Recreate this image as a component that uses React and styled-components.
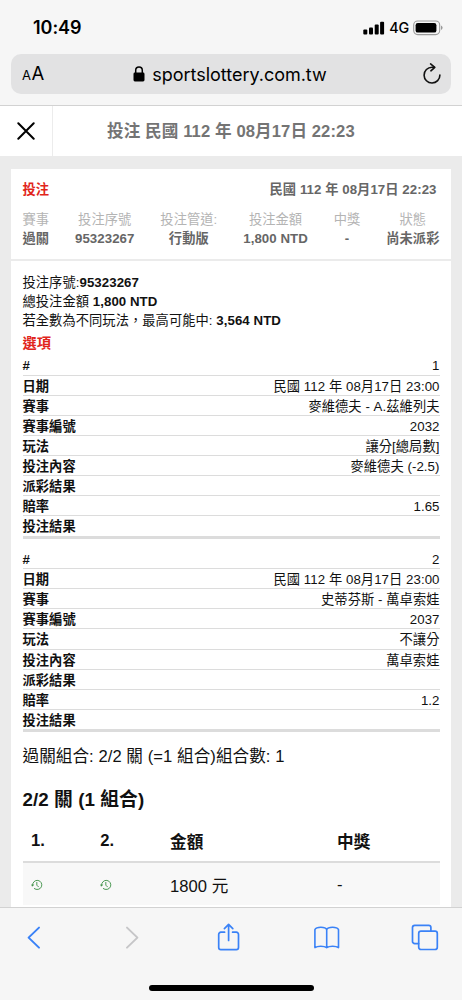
import React from 'react';
import styled, { createGlobalStyle } from 'styled-components';

const Global = createGlobalStyle`
  * { box-sizing: border-box; }
  body { margin: 0; background: #ebebeb; }
`;

const Screen = styled.div`
  width: 462px;
  height: 1000px;
  display: flex;
  flex-direction: column;
  overflow: hidden;
  background: #ebebeb;
  color: #111;
  font-family: 'Liberation Sans', 'Noto Sans CJK TC', sans-serif;
  white-space: nowrap;
`;

const Chrome = styled.header`
  flex: none;
  height: 106px;
  background: #f6f6f6;
  border-bottom: 1px solid #d2d2d2;
  padding: 0 11px;
  font-family: Inter, sans-serif;
  color: #000;
`;

const StatusBar = styled.div`
  height: 54px;
  display: flex;
  align-items: center;
  padding: 1px 8px 0 22px;
`;

const Clock = styled.span`
  flex: 1;
  font-size: 18px;
  font-weight: 600;
  letter-spacing: -0.05px;
`;

const Network = styled.span`
  font-size: 14.3px;
  font-weight: 500;
  letter-spacing: -0.2px;
  margin: 0 4px 0 4px;
`;

const AddressBar = styled.div`
  height: 40px;
  border-radius: 10px;
  background: #e2e2e3;
  display: grid;
  grid-template-columns: 60px 1fr 60px;
  align-items: center;
`;

const TextSize = styled.span`
  padding-left: 11px;
  line-height: 20px;
  font-size: 18.5px;
`;

const SmallA = styled.span`
  font-size: 13px;
  margin-right: 0.5px;
`;

const Url = styled.div`
  display: flex;
  align-items: center;
  justify-content: center;
  gap: 7.5px;
  padding-right: 2.5px;
  font-size: 18px;
  letter-spacing: -0.03px;
`;

const ReloadSlot = styled.div`
  display: flex;
  justify-content: flex-end;
  padding-right: 9px;
`;

const TitleBar = styled.div`
  flex: none;
  height: 50px;
  display: flex;
  background: #fff;
`;

const CloseButton = styled.div`
  width: 52.5px;
  display: flex;
  align-items: center;
  justify-content: center;
  border-right: 1px solid #ececec;
`;

const Title = styled.div`
  flex: 1;
  padding-left: 54.5px;
  line-height: 51px;
  font-size: 16.6px;
  letter-spacing: 0.1px;
  font-weight: 700;
  color: #747474;
`;

const Content = styled.main`
  flex: 1;
  min-height: 0;
  overflow: hidden;
  padding: 12.5px 11px 0;
`;

const Card = styled.section`
  height: 760px;
  background: #fff;
  font-size: 13.25px;
  letter-spacing: 0.06px;
`;

const Summary = styled.div`
  height: 92px;
  padding: 11px 11.5px 0;
  border-bottom: 2px solid #ebebeb;
  color: #666;
  font-weight: 700;
`;

const SummaryHead = styled.div`
  display: flex;
  justify-content: space-between;
  line-height: 20px;
  padding-right: 3px;
`;

const Red = styled.span`
  color: #e1251b;
`;

const Facts = styled.div`
  display: flex;
  justify-content: space-between;
  margin-top: 10px;
`;

const Fact = styled.div`
  text-align: center;
  line-height: 19.3px;
`;

const FactLabel = styled.div`
  font-weight: 400;
  color: #b4b4b4;
`;

const Details = styled.div`
  padding: 12.3px 11.5px 0;
`;

const Line = styled.div`
  line-height: 19.1px;
  height: 19.1px;
`;

const SectionTitle = styled.div`
  margin-top: 2px;
  height: 23.4px;
  line-height: 23px;
  font-size: 14.2px;
  font-weight: 700;
  color: #e1251b;
`;

const Selection = styled.div`
  border-bottom: 3px solid #dcdcdc;
  margin-bottom: 10.3px;
`;

const Row = styled.div`
  display: flex;
  justify-content: space-between;
  height: 20.1px;
  line-height: 22.4px;
  border-bottom: 1px solid #dcdcdc;
  &:last-child { height: 19.6px; border-bottom: 0; }
`;

const Combo = styled.div`
  margin-top: 12.7px;
  height: 24px;
  line-height: 24px;
  font-size: 16.6px;
`;

const Heading = styled.div`
  margin-top: 16.8px;
  height: 28px;
  line-height: 28px;
  font-size: 18.8px;
  font-weight: 700;
`;

const TableRow = styled.div`
  display: grid;
  grid-template-columns: 69.3px 69.7px 167px 1fr;
  align-items: center;
  padding-left: 8.5px;
  font-size: 16.6px;
  height: ${(p) => (p.$head ? 49.5 : 42)}px;
  font-weight: ${(p) => (p.$head ? 700 : 400)};
  background: ${(p) => (p.$head ? '#fff' : '#f8f8f8')};
  border-bottom: ${(p) => (p.$head ? '2px solid #dcdcdc' : '0')};
  padding-top: ${(p) => (p.$head ? 6 : 1)}px;
`;

const Toolbar = styled.footer`
  flex: none;
  height: 93px;
  background: #f6f6f6;
  border-top: 1px solid #d2d2d2;
`;

const Tools = styled.nav`
  display: flex;
  justify-content: space-between;
  padding: 14px 22.5px 0 19px;
`;

const HomeIndicator = styled.div`
  width: 165px;
  height: 5.5px;
  border-radius: 3px;
  background: #000;
  margin: 31px auto 0;
`;

const ToolIcon = ({ color = '#3a82f7', children }) => (
  <svg width="30" height="32" viewBox="0 0 30 32" fill="none" stroke={color} strokeWidth="1.7" strokeLinecap="round" strokeLinejoin="round">
    {children}
  </svg>
);

const Pending = () => (
  <svg width="12" height="12" viewBox="0 0 13 12" fill="none" stroke="#3f9148" strokeWidth="1" strokeLinecap="round">
    <path d="M1.7 6.4A5 5 0 1 1 3.6 9.9" />
    <path d="M.3 5.7h2.8L1.7 7.4z" fill="#3f9148" strokeWidth=".3" />
    <path d="M6.3 3.2v3L8.1 8" />
  </svg>
);

const facts = [
  ['賽事', '過關'],
  ['投注序號', '95323267'],
  ['投注管道:', '行動版'],
  ['投注金額', '1,800 NTD'],
  ['中獎', '-'],
  ['狀態', '尚未派彩'],
];

const labels = ['#', '日期', '賽事', '賽事編號', '玩法', '投注內容', '派彩結果', '賠率', '投注結果'];

const selections = [
  ['1', '民國 112 年 08月17日 23:00', '麥維德夫 - A.茲維列夫', '2032', '讓分[總局數]', '麥維德夫 (-2.5)', '', '1.65', ''],
  ['2', '民國 112 年 08月17日 23:00', '史蒂芬斯 - 萬卓索娃', '2037', '不讓分', '萬卓索娃', '', '1.2', ''],
];

export default function App() {
  return (
    <Screen lang="zh-TW">
      <Global />
      <Chrome>
        <StatusBar>
          <Clock>10:49</Clock>
          <svg width="22" height="14" viewBox="0 0 22 14">
            <rect x="0.3" y="8.6" width="4" height="4.9" rx="1" />
            <rect x="6" y="6.4" width="4" height="7.1" rx="1" />
            <rect x="11.7" y="3.6" width="4" height="9.9" rx="1" />
            <rect x="17.1" y="0.8" width="4" height="12.7" rx="1" />
          </svg>
          <Network>4G</Network>
          <svg width="30" height="16" viewBox="0 0 30 16">
            <rect x="0.7" y="1" width="26" height="13.6" rx="4" fill="none" stroke="#9b9b9b" strokeWidth="1.1" />
            <rect x="2.6" y="3" width="20.8" height="9.6" rx="2.2" />
            <path d="M28 5.6q1.6.7 1.6 2.2t-1.6 2.2z" fill="#999" />
          </svg>
        </StatusBar>
        <AddressBar>
          <TextSize><SmallA>A</SmallA>A</TextSize>
          <Url>
            <svg width="12" height="16" viewBox="0 0 12 16">
              <rect x="0.5" y="6.6" width="11" height="8.8" rx="1.4" />
              <path d="M2.7 7V4.4a3.3 3.3 0 0 1 6.6 0V7" fill="none" stroke="#000" strokeWidth="1.5" />
            </svg>
            sportslottery.com.tw
          </Url>
          <ReloadSlot>
            <svg width="20" height="22" viewBox="0 0 20 22" fill="none" stroke="#111" strokeWidth="1.6" strokeLinecap="round" strokeLinejoin="round">
              <path d="M12.3 4.2H10A7.9 7.9 0 1 0 17.9 12" />
              <path d="M8.6 .9l4.2 3.4L8.9 7.8" />
            </svg>
          </ReloadSlot>
        </AddressBar>
      </Chrome>
      <TitleBar>
        <CloseButton>
          <svg width="18" height="18" viewBox="0 0 18 18" fill="none" stroke="#000" strokeWidth="2" strokeLinecap="round">
            <path d="M1.3 1.3l15.4 15.4M16.7 1.3L1.3 16.7" />
          </svg>
        </CloseButton>
        <Title>投注 民國 112 年 08月17日 22:23</Title>
      </TitleBar>
      <Content>
        <Card>
          <Summary>
            <SummaryHead>
              <Red>投注</Red>
              <span>民國 112 年 08月17日 22:23</span>
            </SummaryHead>
            <Facts>
              {facts.map(([label, value]) => (
                <Fact key={label}>
                  <FactLabel>{label}</FactLabel>
                  {value}
                </Fact>
              ))}
            </Facts>
          </Summary>
          <Details>
            <Line>投注序號:<b>95323267</b></Line>
            <Line>總投注金額 <b>1,800 NTD</b></Line>
            <Line>若全數為不同玩法，最高可能中: <b>3,564 NTD</b></Line>
            <SectionTitle>選項</SectionTitle>
            {selections.map((values) => (
              <Selection key={values[0]}>
                {labels.map((label, i) => (
                  <Row key={label}>
                    <b>{label}</b>
                    <span>{values[i]}</span>
                  </Row>
                ))}
              </Selection>
            ))}
            <Combo>過關組合: 2/2 關 (=1 組合)組合數: 1</Combo>
            <Heading>2/2 關 (1 組合)</Heading>
            <TableRow $head>
              <span>1.</span>
              <span>2.</span>
              <span>金額</span>
              <span>中獎</span>
            </TableRow>
            <TableRow>
              <Pending />
              <Pending />
              <span>1800 元</span>
              <span>-</span>
            </TableRow>
          </Details>
        </Card>
      </Content>
      <Toolbar>
        <Tools>
          <ToolIcon><path d="M20 5.6L9.6 15.6L20 25.6" strokeWidth="2" /></ToolIcon>
          <ToolIcon color="#c6c6c8"><path d="M10 5.6L20.4 15.6L10 25.6" strokeWidth="2" /></ToolIcon>
          <ToolIcon>
            <path d="M10.6 10.2H6.9a2.2 2.2 0 0 0-2.2 2.2v13A2.2 2.2 0 0 0 6.9 27.6h15.4a2.2 2.2 0 0 0 2.2-2.2v-13a2.2 2.2 0 0 0-2.2-2.2h-3.7" />
            <path d="M14.6 18.4V2.6M10.4 6.6l4.2-4.2l4.2 4.2" />
          </ToolIcon>
          <ToolIcon>
            <path d="M14.7 7.6C13.3 4.6 4.6 4.4 2.9 7.6V25.6c2.6-1.9 9.2-1.9 11.8 0c2.6-1.9 9.2-1.9 11.8 0V7.6C24.8 4.4 16.1 4.6 14.7 7.6V25.4" strokeWidth="1.6" />
          </ToolIcon>
          <ToolIcon>
            <path d="M8.6 21.6H4.7a2.2 2.2 0 0 1-2.2-2.2V5.6a2.2 2.2 0 0 1 2.2-2.2h14a2.2 2.2 0 0 1 2.2 2.2v3.3" />
            <rect x="8.7" y="9.2" width="18.6" height="18.3" rx="2.3" />
          </ToolIcon>
        </Tools>
        <HomeIndicator />
      </Toolbar>
    </Screen>
  );
}
